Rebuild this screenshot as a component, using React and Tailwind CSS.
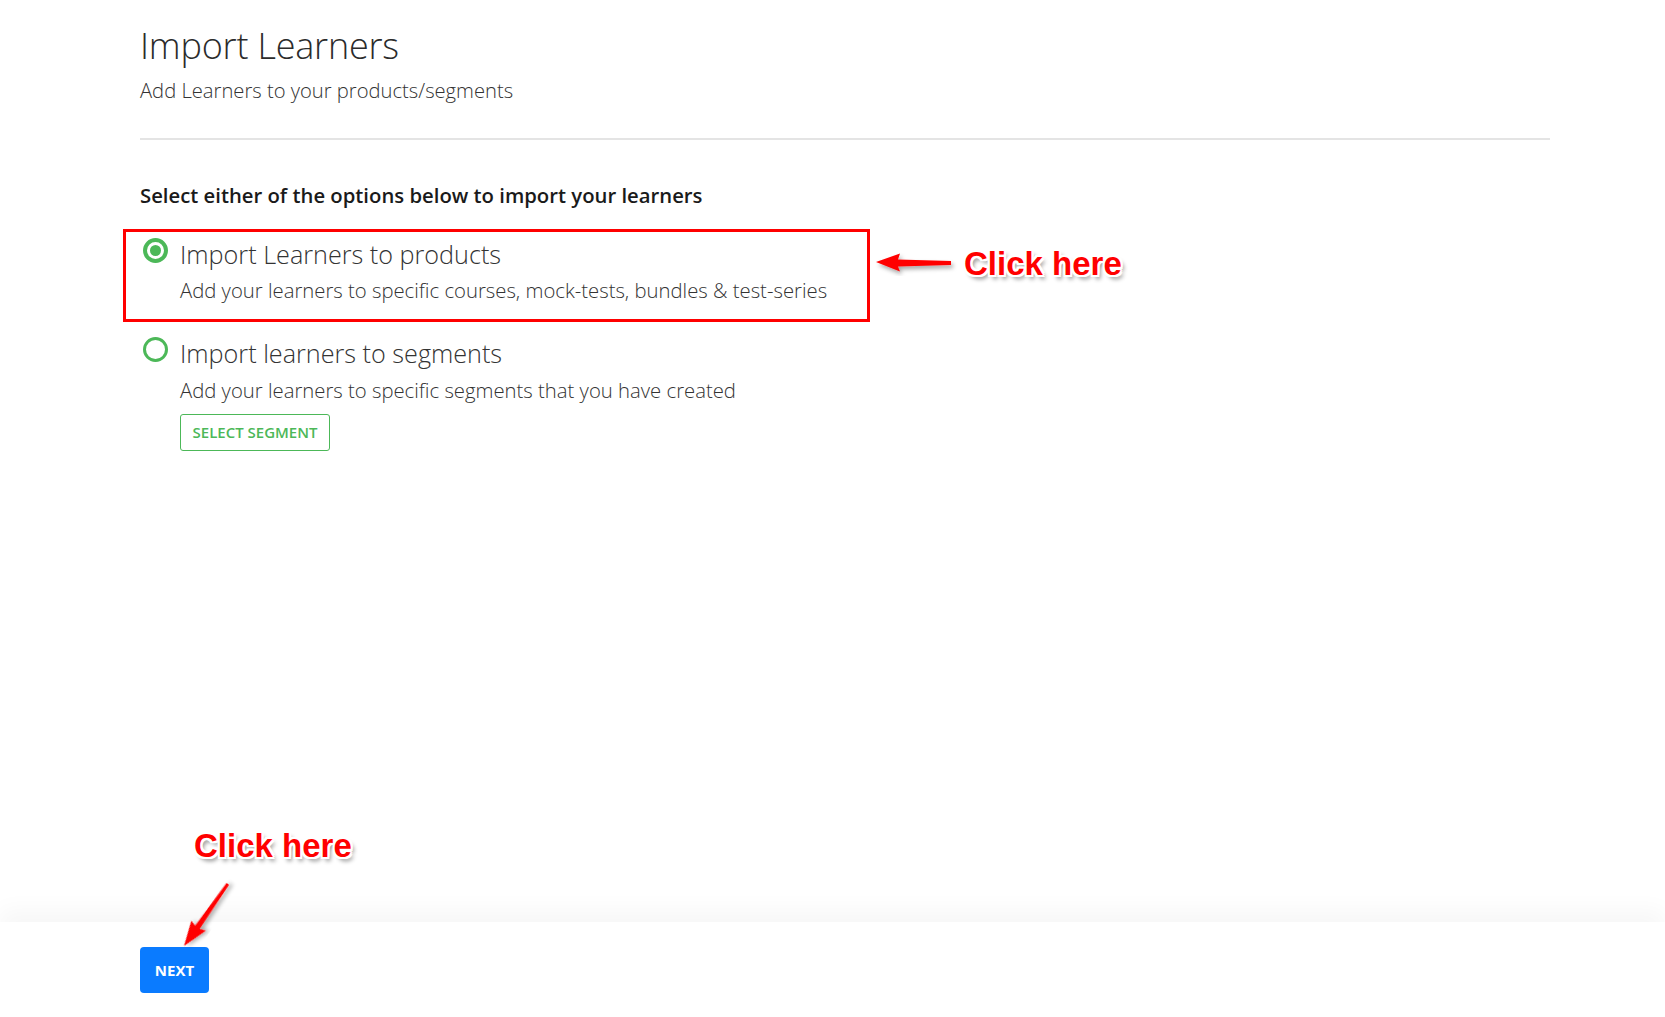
import React from "react";

const annot = {
  fontFamily: '"Liberation Sans", Arial, sans-serif',
  textShadow:
    "-2px -2px 0 #fff, 2px -2px 0 #fff, -2px 2px 0 #fff, 2px 2px 0 #fff, 0 -2px 0 #fff, 0 2px 0 #fff, -2px 0 0 #fff, 2px 0 0 #fff, 3px 4px 4px rgba(0,0,0,0.45)",
};

function Radio({ checked }) {
  return checked ? (
    <div className="w-[25px] h-[25px] rounded-full border-[4px] border-[#4cb858] flex items-center justify-center shrink-0">
      <div className="w-[11px] h-[11px] rounded-full bg-[#4cb858]" />
    </div>
  ) : (
    <div className="w-[25px] h-[25px] rounded-full border-[3px] border-[#4cb858] shrink-0" />
  );
}

export default function App() {
  return (
    <div
      className="relative w-full h-[1017px] bg-white flex flex-col overflow-hidden"
      style={{ fontFamily: '"Open Sans", "Noto Sans", sans-serif' }}
    >
      <main className="flex-1 pl-[140px] pr-[115px] pt-[22px]">
        <h1 className="text-[36px] leading-[48px] font-light text-[#2b2b2b] tracking-[-0.2px]">
          Import Learners
        </h1>
        <p className="mt-[6px] text-[20.2px] leading-[28px] font-light text-[#333]">
          Add Learners to your products/segments
        </p>
        <div className="mt-[34px] h-[2px] bg-[#e4e4e4]" />
        <h2 className="mt-[41px] text-[20.3px] leading-[28px] font-semibold text-[#1a1a1a]">
          Select either of the options below to import your learners
        </h2>

        <div className="mt-[20px] -ml-[17px] w-[747px] flex flex-col gap-[6px]">
          <div className="border-[3px] border-[#ff0000] pl-[17px] pt-[6px] pb-[15px] flex gap-[12px]">
            <Radio checked />
            <div>
              <div className="text-[25.2px] leading-[32px] font-light text-[#333]">
                Import Learners to products
              </div>
              <div className="mt-[6px] text-[20.3px] leading-[28px] font-light text-[#333]">
                Add your learners to specific courses, mock-tests, bundles &amp; test-series
              </div>
            </div>
          </div>
          <div className="border-[3px] border-transparent pl-[17px] pt-[6px] flex gap-[12px]">
            <Radio />
            <div>
              <div className="text-[25.2px] leading-[32px] font-light text-[#333]">
                Import learners to segments
              </div>
              <div className="mt-[7px] text-[20.3px] leading-[28px] font-light text-[#333]">
                Add your learners to specific segments that you have created
              </div>
              <button className="mt-[10px] h-[37px] w-[150px] border border-[#4cb858] rounded-[3px] text-[#4cb858] text-[15px] font-semibold">
                SELECT SEGMENT
              </button>
            </div>
          </div>
        </div>
      </main>

      <footer className="h-[95px] bg-white pl-[140px] pt-[25px] shadow-[0_-12px_22px_rgba(0,0,0,0.035)]">
        <button className="w-[69px] h-[46px] rounded-[4px] bg-[#0a7bff] text-white text-[15px] font-bold">
          NEXT
        </button>
      </footer>

      {/* annotations */}
      <div
        className="absolute left-[964px] top-[244px] text-[33px] leading-[40px] font-bold text-[#ff0000]"
        style={annot}
      >
        Click here
      </div>
      <div
        className="absolute left-[194px] top-[826px] text-[33px] leading-[40px] font-bold text-[#ff0000]"
        style={annot}
      >
        Click here
      </div>
      <svg
        className="absolute inset-0 pointer-events-none"
        width="1665"
        height="1017"
        viewBox="0 0 1665 1017"
      >
        <defs>
          <filter id="sh" x="-20%" y="-20%" width="140%" height="140%">
            <feDropShadow dx="2" dy="3" stdDeviation="2" floodColor="#000" floodOpacity="0.35" />
          </filter>
        </defs>
        <polygon
          filter="url(#sh)"
          fill="#ff0000"
          points="876,262 900,253.5 898,259.5 951,261 951,265 898,266.5 900,271.5"
        />
        <polygon
          filter="url(#sh)"
          fill="#ff0000"
          transform="rotate(-55 184 946)"
          points="184,946 209,937.5 207,943.5 260,944.8 260,947.8 207,949 209,955"
        />
      </svg>
    </div>
  );
}
